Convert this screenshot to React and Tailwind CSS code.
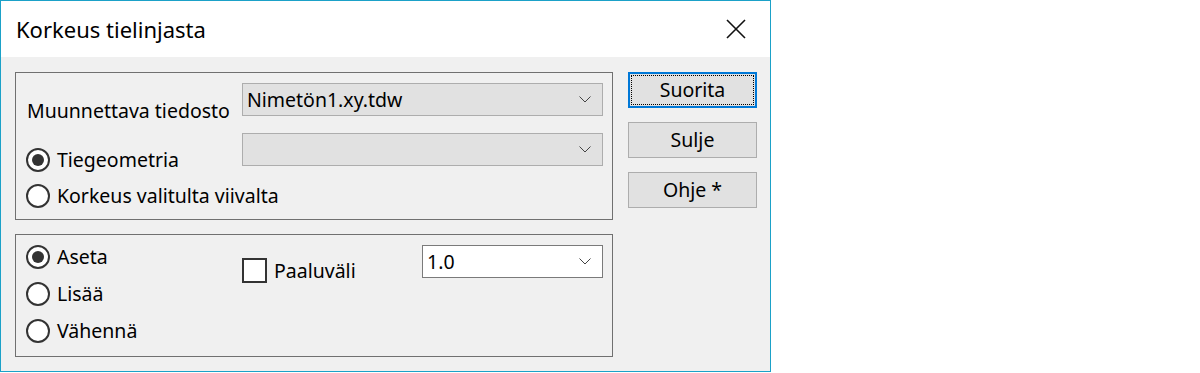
import React from "react";

const font = { fontFamily: '"Noto Sans", "Open Sans", sans-serif' };

function Chevron() {
  return (
    <svg width="12" height="7" viewBox="0 0 12 7" className="shrink-0">
      <path d="M0.5 0.5 L6 6 L11.5 0.5" fill="none" stroke="#444" strokeWidth="1" />
    </svg>
  );
}

function Combo({ value, white }) {
  return (
    <div
      className={`flex items-center justify-between h-[33px] pl-[4px] pr-[11px] border ${
        white ? "bg-white border-[#7a7a7a]" : "bg-[#e1e1e1] border-[#adadad]"
      }`}
    >
      <span className="leading-none">{value}</span>
      <Chevron />
    </div>
  );
}

function Radio({ checked, label }) {
  return (
    <div className="flex items-center h-[25px]">
      <div className="w-[24px] h-[24px] rounded-full border-2 border-[#333] bg-white flex items-center justify-center shrink-0">
        {checked && <div className="w-[12px] h-[12px] rounded-full bg-[#333]" />}
      </div>
      <span className="ml-[7px] leading-none">{label}</span>
    </div>
  );
}

function Button({ label, primary }) {
  return (
    <div
      className={`h-[36px] w-[129px] bg-[#e1e1e1] flex items-center justify-center ${
        primary ? "border-2 border-[#0078d7] p-[1px]" : "border border-[#adadad]"
      }`}
    >
      {primary ? (
        <div className="w-full h-full border border-dotted border-black flex items-center justify-center">
          {label}
        </div>
      ) : (
        label
      )}
    </div>
  );
}

export default function App() {
  return (
    <div className="w-[1200px] h-[373px] bg-white text-[19.5px] text-black" style={font}>
      <div className="w-[771px] h-[372px] border border-[#1ba1c8] flex flex-col">
        <div className="h-[56px] bg-white flex items-center justify-between pl-[15px] pr-[24px]">
          <span className="text-[22px] pt-[1px]">Korkeus tielinjasta</span>
          <svg width="20" height="20" viewBox="0 0 20 20">
            <path d="M1 1 L19 19 M19 1 L1 19" stroke="#111" strokeWidth="1.6" />
          </svg>
        </div>
        <div className="flex-1 bg-[#f0f0f0] flex pt-[15px] pl-[14px]">
          <div className="w-[598px] flex flex-col gap-[14px]">
            <div className="h-[148px] border border-[#707070] pl-[10px] pr-[9px] pt-[10px]">
              <div className="flex items-start h-[33px]">
                <span className="w-[216px] pt-[18px] pl-[1px] leading-none">Muunnettava tiedosto</span>
                <div className="flex-1">
                  <Combo value="Nimetön1.xy.tdw" />
                </div>
              </div>
              <div className="flex items-start h-[33px] mt-[17px]">
                <div className="w-[216px] pt-[14px]">
                  <Radio checked label="Tiegeometria" />
                </div>
                <div className="flex-1">
                  <Combo value="" />
                </div>
              </div>
              <div className="mt-[17px]">
                <Radio label="Korkeus valitulta viivalta" />
              </div>
            </div>
            <div className="h-[123px] border border-[#707070] pl-[10px] pr-[9px] pt-[9px] flex">
              <div className="w-[216px] flex flex-col gap-[12px]">
                <Radio checked label="Aseta" />
                <Radio label="Lisää" />
                <Radio label="Vähennä" />
              </div>
              <div className="flex-1 flex items-start pt-[1px]">
                <div className="flex items-center mt-[13px]">
                  <div className="w-[25px] h-[25px] border-2 border-[#333] bg-white shrink-0" />
                  <span className="ml-[7px] leading-none">Paaluväli</span>
                </div>
                <div className="ml-auto w-[181px]">
                  <Combo value="1.0" white />
                </div>
              </div>
            </div>
          </div>
          <div className="ml-[15px] flex flex-col gap-[14px]">
            <Button label="Suorita" primary />
            <Button label="Sulje" />
            <Button label="Ohje *" />
          </div>
        </div>
      </div>
    </div>
  );
}
